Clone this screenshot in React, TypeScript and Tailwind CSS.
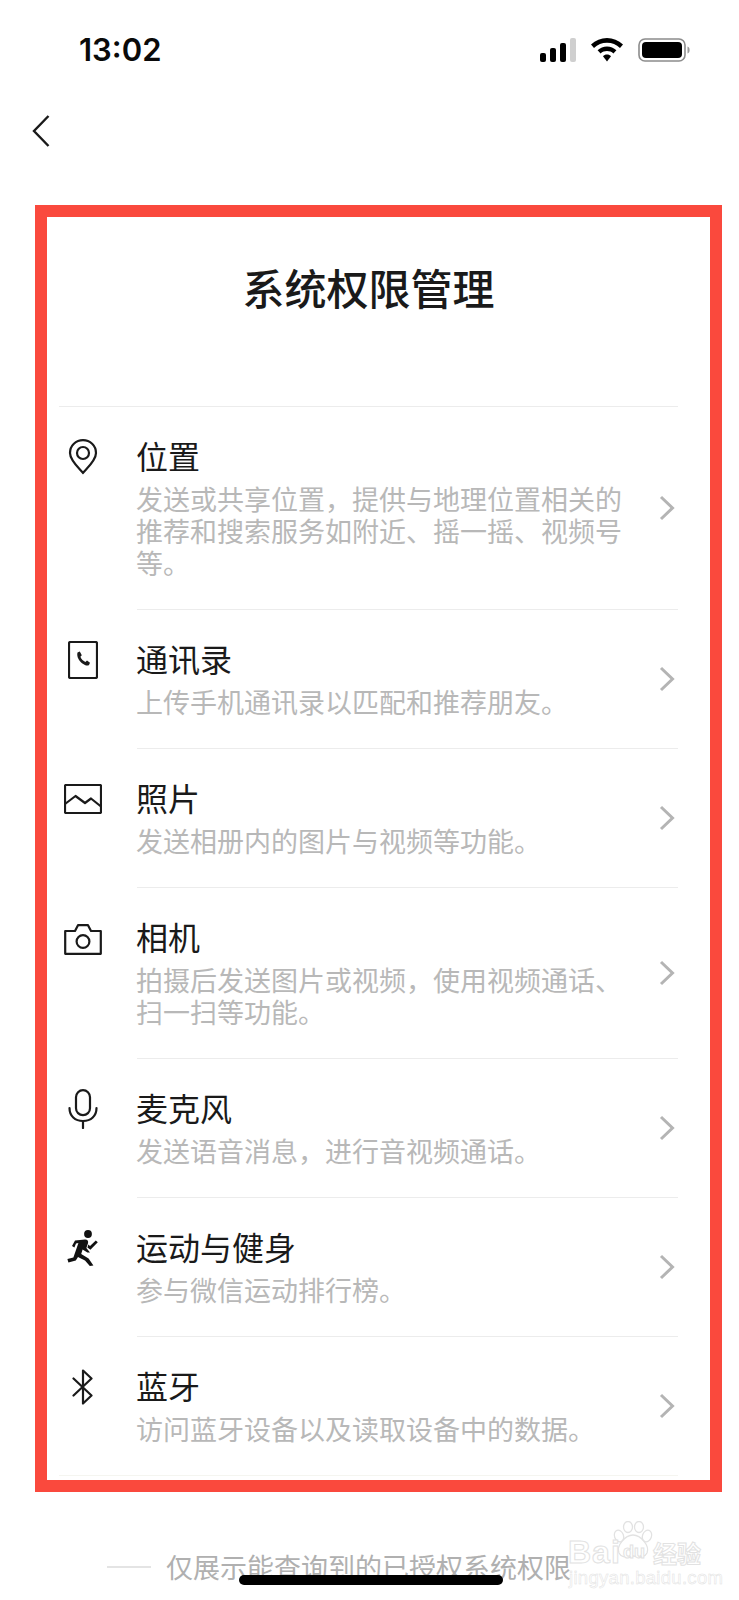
import React from "react";

const CJK = { fontFamily: '"Noto Sans CJK SC", "Noto Sans", sans-serif' };

function Pin() {
  return (
    <svg width="30" height="36" viewBox="0 0 30 36" fill="none" stroke="#1a1a1a" strokeWidth="2.2" strokeLinejoin="round">
      <path d="M15 34 C13 31 2 22 2 14 C2 6.5 8 1.2 15 1.2 C22 1.2 28 6.5 28 14 C28 22 17 31 15 34 Z" />
      <circle cx="15" cy="14" r="6" />
    </svg>
  );
}
function Contact() {
  return (
    <svg width="30" height="38" viewBox="0 0 30 38" fill="none">
      <rect x="1" y="1" width="28" height="36" rx="1.5" stroke="#1a1a1a" strokeWidth="2.2" />
      <path d="M9.5 11.5 L11.8 10.5 L13.8 14.2 L12.4 15.8 C13.2 18 15.4 20.2 17.4 21 L19 19.6 L22 21.8 L21 24 C19.6 25.2 17 24.6 14.4 22.6 C11 20 8.4 15.6 9.5 11.5 Z" fill="#1a1a1a" />
    </svg>
  );
}
function Picture() {
  return (
    <svg width="38" height="30" viewBox="0 0 38 30" fill="none" stroke="#1a1a1a" strokeWidth="2.2" strokeLinejoin="round">
      <rect x="1" y="1" width="36" height="28" rx="1" />
      <path d="M1 20 L11.5 12 L21 19 L27 14.5 L37 22.5" />
    </svg>
  );
}
function Camera() {
  return (
    <svg width="38" height="31" viewBox="0 0 38 31" fill="none" stroke="#1a1a1a" strokeWidth="2.2" strokeLinejoin="round">
      <path d="M1.2 7 H11 L14 1.2 H24 L27 7 H36.8 V29.8 H1.2 Z" />
      <circle cx="19" cy="17.5" r="6.4" />
    </svg>
  );
}
function Mic() {
  return (
    <svg width="30" height="40" viewBox="0 0 30 40" fill="none" stroke="#1a1a1a" strokeWidth="2.2" strokeLinecap="round">
      <rect x="8" y="1.2" width="14" height="25" rx="7" />
      <path d="M1.5 19 C1.5 27 7 32 15 32 C23 32 28.5 27 28.5 19" />
      <path d="M15 32 V39" />
    </svg>
  );
}
function Runner() {
  return (
    <svg width="32" height="36" viewBox="0 0 32 36" fill="#111">
      <circle cx="21" cy="4" r="3.9" />
      <path d="M5 16 L8 10.4 L18 9.4 C20.6 9.4 21.6 11 21 13.2 L19.4 18 L23 22.6 L20.4 22.6 L15.6 19.6 L14.2 24 L21.6 28.6 L26.4 35.4 L22.8 36 L18 30.4 L11 27 L8.8 30.6 L1.4 32.4 L0.4 29 L6.4 27.4 L10.2 16.6 L11.4 13 L9 13.6 L7.4 17.4 Z" />
      <path d="M21.4 14.4 L23 16 L28.8 10.4 L30.8 12.2 L23.4 19.8 L20.4 17.4 Z" />
    </svg>
  );
}
function Bluetooth() {
  return (
    <svg width="22" height="36" viewBox="0 0 22 36" fill="none" stroke="#1a1a1a" strokeWidth="2.2" strokeLinejoin="round" strokeLinecap="round">
      <path d="M1.5 9.5 L19.5 26.5 L11 34.5 V1.5 L19.5 9.5 L1.5 26.5" />
    </svg>
  );
}
function Chevron() {
  return (
    <svg className="mt-[2px]" width="16" height="26" viewBox="0 0 16 26" fill="none" stroke="#b4b4b4" strokeWidth="3">
      <path d="M2 2 L13.5 13 L2 24" />
    </svg>
  );
}

const rows: { title: string; sub: string; icon: React.ReactNode; iconTop: string }[] = [
  { title: "位置", sub: "发送或共享位置，提供与地理位置相关的推荐和搜索服务如附近、摇一摇、视频号等。", icon: <Pin />, iconTop: "pt-[33px]" },
  { title: "通讯录", sub: "上传手机通讯录以匹配和推荐朋友。", icon: <Contact />, iconTop: "pt-[32px]" },
  { title: "照片", sub: "发送相册内的图片与视频等功能。", icon: <Picture />, iconTop: "pt-[36px]" },
  { title: "相机", sub: "拍摄后发送图片或视频，使用视频通话、扫一扫等功能。", icon: <Camera />, iconTop: "pt-[37px]" },
  { title: "麦克风", sub: "发送语音消息，进行音视频通话。", icon: <Mic />, iconTop: "pt-[31px]" },
  { title: "运动与健身", sub: "参与微信运动排行榜。", icon: <Runner />, iconTop: "pt-[33px]" },
  { title: "蓝牙", sub: "访问蓝牙设备以及读取设备中的数据。", icon: <Bluetooth />, iconTop: "pt-[33px]" },
];

function Row({ row }: { row: (typeof rows)[number] }) {
  return (
    <div className="flex">
      <div className="w-[78px] shrink-0">
        <div className={`w-[48px] flex justify-center ${row.iconTop}`}>{row.icon}</div>
      </div>
      <div className="flex-1 flex items-center justify-between pt-[28px] pb-[30px] pr-[3px] border-t border-[#ececec]">
        <div className="w-[500px] -ml-px">
          <div className="text-[32px] leading-[40px] text-[#1a1a1a]">{row.title}</div>
          <div className="mt-[8px] text-[27px] leading-[32px] text-[#b8b8b8]">{row.sub}</div>
        </div>
        <Chevron />
      </div>
    </div>
  );
}

export default function App() {
  return (
    <div className="relative w-[739px] h-[1600px] overflow-hidden bg-white" style={CJK}>
      {/* status bar */}
      <div className="h-[100px] flex items-center justify-between pl-[79px] pr-[49px]">
        <span className="text-[31px] font-semibold text-[#0a0a0a]" style={{ fontFamily: '"Inter", sans-serif' }}>
          13:02
        </span>
        <div className="flex items-center gap-[15px]">
          <svg width="36" height="24" viewBox="0 0 36 24">
            <rect x="0" y="15" width="6" height="9" rx="2" fill="#000" />
            <rect x="10" y="10" width="6" height="14" rx="2" fill="#000" />
            <rect x="20" y="5" width="6" height="19" rx="2" fill="#000" />
            <rect x="30" y="0" width="6" height="24" rx="2" fill="#cfcfcf" />
          </svg>
          <svg width="32" height="24" viewBox="0 0 32 24" fill="#000">
            <path d="M16 0 C22 0 27.5 2.4 32 6.6 L29 10 C25.4 6.6 21 4.8 16 4.8 C11 4.8 6.6 6.6 3 10 L0 6.6 C4.5 2.4 10 0 16 0 Z" />
            <path d="M16 8.4 C19.6 8.4 22.8 9.8 25.4 12.2 L22.4 15.4 C20.6 13.8 18.4 13 16 13 C13.6 13 11.4 13.8 9.6 15.4 L6.6 12.2 C9.2 9.8 12.4 8.4 16 8.4 Z" />
            <path d="M16 16.6 C17.6 16.6 19 17.2 20 18.2 L16 23.6 L12 18.2 C13 17.2 14.4 16.6 16 16.6 Z" />
          </svg>
          <svg width="52" height="24" viewBox="0 0 52 24" fill="none">
            <rect x="1" y="1" width="46" height="22" rx="6" stroke="#8c8c8c" strokeWidth="1.6" />
            <rect x="4" y="4" width="40" height="16" rx="4" fill="#000" />
            <path d="M49.5 8.5 C51 9 51.6 10.4 51.6 12 C51.6 13.6 51 15 49.5 15.5 Z" fill="#9a9a9a" />
          </svg>
        </div>
      </div>

      {/* nav */}
      <div className="h-[105px] pl-[32px] pt-[15px]">
        <svg width="18" height="32" viewBox="0 0 18 32" fill="none" stroke="#1a1a1a" strokeWidth="2.4">
          <path d="M16.5 1 L2 16 L16.5 31" />
        </svg>
      </div>

      {/* red annotated frame */}
      <div className="ml-[35px] w-[687px] h-[1287px] border-[12px] border-[#fa493d] pl-[12px] pr-[32px]">
        <div className="h-[189px] flex items-start justify-center pt-[42px]">
          <h1 className="text-[42px] leading-[56px] font-medium text-[#1a1a1a]">系统权限管理</h1>
        </div>
        <div className="border-t border-[#ececec]">
          {rows.map((row, i) => (
            <div key={row.title} className={i === 0 ? "-mt-px" : ""}>
              <Row row={row} />
            </div>
          ))}
        </div>
        <div className="border-t border-[#f5f5f0]" />
      </div>

      {/* footer */}
      <div className="mt-[57px] ml-[107px] flex items-center gap-[15px]">
        <div className="w-[44px] h-[2px] bg-[#e4e4e4]" />
        <span className="text-[27px] leading-[36px] text-[#b0b0b0]">仅展示能查询到的已授权系统权限</span>
      </div>

      {/* home indicator */}
      <div className="absolute left-[239px] top-[1575px] w-[264px] h-[10px] rounded-full bg-black" />

      {/* watermark */}
      <div className="absolute left-[568px] top-[1521px] w-[135px] h-[64px] text-white [-webkit-text-stroke:1px_#e2e2e2]" style={{ fontFamily: '"Liberation Sans", sans-serif' }}>
        <svg className="absolute left-[45px] top-0" width="40" height="38" viewBox="0 0 40 38" fill="none" stroke="#e2e2e2" strokeWidth="1.3">
          <ellipse cx="6" cy="15" rx="4.5" ry="6" transform="rotate(-20 6 15)" />
          <ellipse cx="15" cy="6" rx="4.5" ry="5.5" />
          <ellipse cx="26" cy="6" rx="4.5" ry="5.5" />
          <ellipse cx="34" cy="15" rx="4.5" ry="6" transform="rotate(20 34 15)" />
          <path d="M20 14 C28 14 37 25 34 32 C31 38 25 35 20 35 C15 35 9 38 6 32 C3 25 12 14 20 14 Z" />
        </svg>
        <span className="absolute left-0 top-[14px] text-[32px] leading-[34px] font-bold tracking-[1px]">Bai</span>
        <span className="absolute left-[55px] top-[20px] text-[18px] leading-[22px] font-bold">du</span>
        <span className="absolute left-[85px] top-[18px] text-[24px] leading-[28px] font-bold" style={CJK}>经验</span>
        <span className="absolute left-[1px] top-[48px] text-[18.5px] leading-[18px] whitespace-nowrap tracking-[0.3px] [-webkit-text-stroke:0.5px_#e2e2e2]">jingyan.baidu.com</span>
      </div>
    </div>
  );
}
